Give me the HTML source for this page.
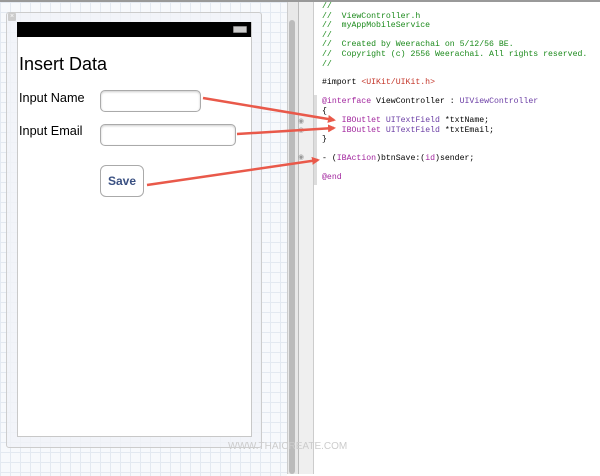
<!DOCTYPE html>
<html><head><style>
body{margin:0;width:600px;height:474px;overflow:hidden;position:relative;background:#fff;font-family:"Liberation Sans",sans-serif}
.grid{position:absolute;left:0;top:0;width:287px;height:474px;background-color:#f7f9fc;
background-image:linear-gradient(#e3e9f1 1px,transparent 1px),linear-gradient(90deg,#e3e9f1 1px,transparent 1px);background-size:10px 10px}
.abs{position:absolute}
.code{position:absolute;left:322px;font-family:"Liberation Mono",monospace;font-size:8.2px;white-space:pre;line-height:9.6px;color:#000}
.c{color:#1b8a1b}.k{color:#a2269e}.r{color:#c4362a}.t{color:#6b3ea5}
</style></head><body>
<div class="abs" style="left:0;top:0;width:600px;height:2px;background:#999"></div>
<div class="grid" style="top:2px"></div>
<div class="abs" style="left:6px;top:12px;width:254px;height:434px;border:1px solid #ccc;border-radius:3px;background:rgba(240,243,247,.8)"></div>
<div class="abs" style="left:8px;top:13px;width:8px;height:8px;background:#ccc;border-radius:1px;color:#fff;font-size:7px;line-height:8px;text-align:center">×</div>
<div class="abs" style="left:17px;top:22px;width:233px;height:414px;background:#fff;border:1px solid #c8c8c8;border-top:none"></div>
<div class="abs" style="left:17px;top:22px;width:234px;height:15px;background:#000"></div>
<div class="abs" style="left:233px;top:26px;width:12px;height:5px;background:#ccc;border:1px solid #888;border-radius:1px"></div>
<div class="abs" style="left:19px;top:54px;font-size:18px">Insert Data</div>
<div class="abs" style="left:19px;top:91px;font-size:12.7px">Input Name</div>
<div class="abs" style="left:19px;top:124px;font-size:12.7px">Input Email</div>
<div class="abs" style="left:100px;top:90px;width:99px;height:20px;border:1px solid #aaa;border-radius:5px;box-shadow:inset 0 1px 2px #ccc"></div>
<div class="abs" style="left:100px;top:124px;width:134px;height:20px;border:1px solid #aaa;border-radius:5px;box-shadow:inset 0 1px 2px #ccc"></div>
<div class="abs" style="left:100px;top:165px;width:42px;height:30px;border:1px solid #aaa;border-radius:6px;color:#3a5082;font-weight:bold;font-size:12px;line-height:30px;text-align:center">Save</div>
<div class="abs" style="left:287px;top:2px;width:10px;height:472px;background:#e8e8e8;border-left:1px solid #ccc;border-right:2px solid #bbb"></div>
<div class="abs" style="left:289px;top:20px;width:6px;height:454px;background:#bbb;border-radius:3px"></div>
<div class="abs" style="left:299px;top:2px;width:14px;height:472px;background:#efefef;border-right:1px solid #ccc"></div>
<div class="abs" style="left:314px;top:95px;width:3px;height:90px;background:#ddd"></div>
<div class="abs" style="left:298px;top:117px;font-size:7px;color:#999">◉</div>
<div class="abs" style="left:298px;top:126px;font-size:7px;color:#999">◉</div>
<div class="abs" style="left:298px;top:153px;font-size:7px;color:#999">◉</div>
<div class="code" style="top:2px"><span class="c">//
//  ViewController.h
//  myAppMobileService
//
//  Created by Weerachai on 5/12/56 BE.
//  Copyright (c) 2556 Weerachai. All rights reserved.
//</span></div>
<div class="code" style="top:78px">#import <span class="r">&lt;UIKit/UIKit.h&gt;</span></div>
<div class="code" style="top:97px"><span class="k">@interface</span> ViewController : <span class="t">UIViewController</span>
{
    <span class="k">IBOutlet</span> <span class="t">UITextField</span> *txtName;
    <span class="k">IBOutlet</span> <span class="t">UITextField</span> *txtEmail;
}</div>
<div class="code" style="top:154px">- (<span class="k">IBAction</span>)btnSave:(<span class="k">id</span>)sender;</div>
<div class="code" style="top:173px"><span class="k">@end</span></div>
<div class="abs" style="left:228px;top:441px;font-size:10px;color:#ccc;letter-spacing:0">WWW.THAICREATE.COM</div>
<svg class="abs" style="left:0;top:0" width="600" height="474">
<defs><marker id="a" markerWidth="8" markerHeight="8" refX="6" refY="4" orient="auto" markerUnits="userSpaceOnUse"><path d="M0,0 L8,4 L0,8 z" fill="#e9594a"/></marker></defs>
<g stroke="#e9594a" stroke-width="2.5" fill="none" marker-end="url(#a)">
<line x1="203" y1="98" x2="334" y2="120"/>
<line x1="237" y1="134" x2="334" y2="128"/>
<line x1="147" y1="185" x2="318" y2="160"/>
</g></svg>
</body></html>
